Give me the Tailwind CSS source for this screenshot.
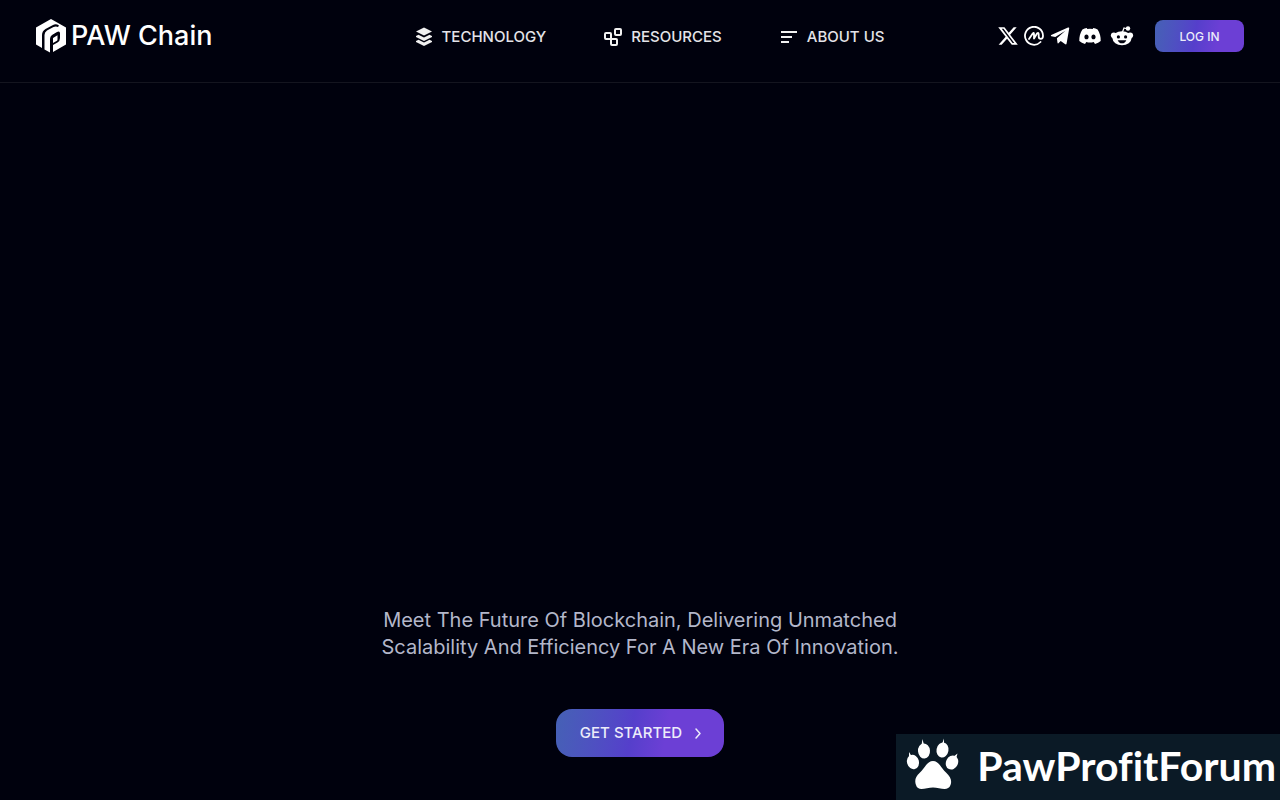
<!DOCTYPE html>
<html lang="en">
<head>
<meta charset="utf-8">
<meta name="viewport" content="width=device-width, initial-scale=1">
<title>PAW Chain</title>
<script src="https://cdn.jsdelivr.net/npm/@tailwindcss/browser@4"></script>
</head>
<body class="flex min-h-screen flex-col bg-[#00010d] font-['Inter',sans-serif] text-white">
<header class="grid grid-cols-[1fr_auto_1fr] items-start border-b border-[#14151f] px-9 pt-4 pb-6">
  <a href="#" class="flex h-10 items-center gap-[3px]">
    <svg class="h-9 w-8 shrink-0" viewBox="0 0 32 36" fill="#fff" aria-hidden="true">
      <path d="M15 1 30 9.500V26.500L17 34V27L21.500 24.500Q24 23 24 20V15.500Q24 12.500 21 14L16 17Q14 18.500 14 21V34.500L8.500 31.500V17Q8.500 14 11 12.500L17.500 9Q20 8 22 9L23 7.500Q20 5.500 17 7L9.500 11Q6 13 6 17V30L0 26.500V9.500Z"/>
      <path d="M17 20 21.500 17.300V21.500Q21.500 22.500 20.500 23L17 25Z"/>
    </svg>
    <span class="text-[27px] leading-9 font-medium whitespace-nowrap">PAW Chain</span>
  </a>
  <nav class="flex h-[42px] items-center gap-[55px] pl-4 text-[15px] font-medium text-[#e4e4e8]">
    <a href="#" class="flex items-center gap-1.5">
      <svg class="size-6" viewBox="0 0 24 24" fill="#f1f1f1" aria-hidden="true"><path d="M12 2.500 20 6.500 12 10.500 4 6.500ZM4 11 6.500 9.800 12 12.500 17.500 9.800 20 11V12L12 16 4 12ZM4 16 6.500 14.800 12 17.500 17.500 14.800 20 16V17L12 21 4 17Z"/></svg>
      TECHNOLOGY
    </a>
    <a href="#" class="flex items-center gap-1.5">
      <svg class="size-6" viewBox="0 0 24 24" fill="none" stroke="#f1f1f1" stroke-width="2" aria-hidden="true"><rect x="4" y="8" width="6" height="6" rx="1"/><rect x="10" y="14" width="6" height="6" rx="1"/><rect x="14" y="4" width="6" height="6" rx="1"/></svg>
      RESOURCES
    </a>
    <a href="#" class="flex items-center gap-1.5">
      <svg class="size-6" viewBox="0 0 24 24" fill="none" stroke="#f1f1f1" stroke-width="2" aria-hidden="true"><path d="M4 7H20M4 12H15M4 17H12"/></svg>
      ABOUT US
    </a>
  </nav>
  <div class="flex h-10 items-center justify-end">
    <div class="mr-[21px] flex items-center gap-1.5">
      <a href="#" aria-label="X"><svg class="size-5" viewBox="1 1 22 22" fill="#fff"><path d="M18.244 2.250h3.308l-7.227 8.260 8.502 11.240H16.170l-5.214-6.817L4.990 21.750H1.680l7.730-8.835L1.254 2.250H8.080l4.713 6.231zm-1.161 17.520h1.833L7.084 4.126H5.117z"/></svg></a>
      <a href="#" aria-label="CoinMarketCap"><svg class="size-5" viewBox="0 0 20 20" fill="none" stroke="#fff" stroke-width="1.800" stroke-linecap="round" stroke-linejoin="round"><path d="M16.500 16A9 9 0 1 1 19 10Q19 12.800 16.800 12.800Q14.700 12.800 14.700 10.500V8.500Q14.700 6 13 7.500L10 12.500V8Q10 6 8.700 7.500L5 13"/></svg></a>
      <a href="#" aria-label="Telegram"><svg class="size-5" viewBox="0 0 20 20" fill="#fff"><path d="M1.200 9.100 18 1.600Q19.400 1 19.200 2.600L16.600 17.500Q16.300 19 14.900 18.100L10.700 15 8.400 17.200Q7.700 17.800 7.500 16.800L6.900 12.200 15.400 4.800 5.300 11.100 1.300 10.200Q.3 9.700 1.200 9.100Z"/></svg></a>
      <a href="#" aria-label="Discord" class="ml-0.5"><svg class="size-6" viewBox="0 0 24 24" fill="#fff"><path fill-rule="evenodd" d="M8.800 4 9.300 5Q12 4.500 14.700 5L15.200 4Q17.500 4.300 19.600 5.400Q22.900 10.400 22.700 17Q20.400 19 17 20L15.700 18Q12 19 8.300 18L7 20Q3.600 19 1.300 17Q1.100 10.400 4.400 5.400Q6.500 4.300 8.800 4ZM8.500 10.500C7.200 10.500 6.400 11.600 6.400 12.900S7.200 15.300 8.500 15.300 10.600 14.200 10.600 12.900 9.700 10.500 8.500 10.500ZM15.500 10.500C14.300 10.500 13.400 11.600 13.400 12.900S14.300 15.300 15.500 15.300 17.600 14.200 17.600 12.900 16.800 10.500 15.500 10.500Z"/></svg></a>
      <a href="#" aria-label="Reddit" class="ml-0.5"><svg class="size-6" viewBox="0 0 24 24" fill="#fff"><path d="M12.500 8 14 4 18 5" fill="none" stroke="#fff" stroke-width="1.200"/><circle cx="18" cy="4.500" r="2.200"/><circle cx="3.800" cy="11.300" r="2.900"/><circle cx="20.200" cy="11.300" r="2.900"/><ellipse cx="12" cy="14.300" rx="9.500" ry="7"/><g fill="#00010d"><circle cx="8.400" cy="12.900" r="1.600"/><circle cx="15.600" cy="12.900" r="1.600"/><path d="M7.700 16.200H16.300Q15.200 19.300 12 19.300T7.700 16.200Z"/></g></svg></a>
    </div>
    <button type="button" class="h-8 min-w-[89px] rounded-lg bg-linear-100 from-[#4561b5] via-[#553fcb] via-45% to-[#6c3fd5] to-70% px-6 pt-0.5 text-xs font-medium whitespace-nowrap text-[#ececfa]">LOG IN</button>
  </div>
</header>
<main class="flex flex-1 flex-col items-center justify-end px-6 pb-[43px]">
  <p class="text-center text-xl leading-[27px] font-normal text-[#b3b7ca]">Meet The Future Of Blockchain, Delivering Unmatched<br>Scalability And Efficiency For A New Era Of Innovation.</p>
  <button type="button" class="mt-12 flex h-12 items-center gap-2 rounded-2xl bg-linear-100 from-[#4561b5] via-[#553fcb] via-45% to-[#6c3fd5] to-65% pr-[18px] pl-6 text-[15px] font-medium text-[#ececfa]">
    GET STARTED
    <svg class="size-4" viewBox="0 0 16 16" fill="none" stroke="currentColor" stroke-width="1.500" stroke-linecap="round" stroke-linejoin="round" aria-hidden="true"><path d="m6 4 4 4.500-4 4.500"/></svg>
  </button>
</main>
<a href="#" class="fixed right-0 bottom-0 flex h-[66px] w-96 items-start justify-between bg-[#0b1a26] pr-1 pl-2">
  <svg class="h-14 w-14 shrink-0" viewBox="0 -1 56 56" fill="#fff" aria-hidden="true">
    <ellipse cx="9" cy="27" rx="6" ry="7.300" transform="rotate(-15 9 27)"/>
    <ellipse cx="20" cy="16" rx="6" ry="7.500" transform="rotate(-5 20 16)"/>
    <ellipse cx="38.500" cy="15" rx="6" ry="7.500" transform="rotate(10 38.500 15)"/>
    <ellipse cx="48" cy="27.500" rx="6" ry="7.300" transform="rotate(25 48 27.500)"/>
    <path d="M5 22 5 17 7.500 21ZM17.500 10 18.500 4 20 10ZM38 9 40 3.500 40 9ZM49 22 53.500 18.500 52 24Z"/>
    <path d="M29 26C35 26 37 33 42 37.500C47 42 48 46 46.500 50C44 57 36 52.500 29 52.500C22 52.500 14 57 12 50C10.500 46 11 42 16 37.500C21 33 23 26 29 26Z"/>
  </svg>
  <span class="font-['Lato',sans-serif] text-[41px] leading-[64px] font-bold [font-variant-ligatures:none]">PawProfitForum</span>
</a>
</body>
</html>
